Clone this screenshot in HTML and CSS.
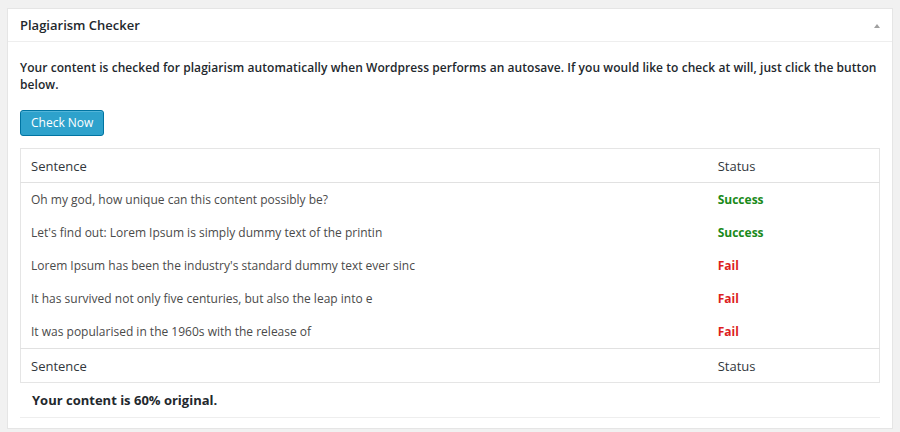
FILE: index.html
```html
<!DOCTYPE html>
<html lang="en">
<head>
<meta charset="utf-8">
<title>Plagiarism Checker</title>
<link rel="stylesheet" href="styles.css">
</head>
<body>
<div class="postbox">
  <div class="postbox-header">
    <h2 class="postbox-title">Plagiarism Checker</h2>
    <span class="toggle-arrow" aria-hidden="true"></span>
  </div>
  <div class="inside">
    <p class="intro">Your content is checked for plagiarism automatically when Wordpress performs an autosave. If you would like to check at will, just click the button below.</p>
    <button class="btn-check" type="button">Check Now</button>
    <table class="results">
      <thead>
        <tr><th class="col-sentence">Sentence</th><th class="col-status">Status</th></tr>
      </thead>
      <tbody>
        <tr><td>Oh my god, how unique can this content possibly be?</td><td class="status ok">Success</td></tr>
        <tr><td>Let's find out: Lorem Ipsum is simply dummy text of the printin</td><td class="status ok">Success</td></tr>
        <tr><td>Lorem Ipsum has been the industry's standard dummy text ever sinc</td><td class="status fail">Fail</td></tr>
        <tr><td>It has survived not only five centuries, but also the leap into e</td><td class="status fail">Fail</td></tr>
        <tr><td>It was popularised in the 1960s with the release of</td><td class="status fail">Fail</td></tr>
      </tbody>
      <tfoot>
        <tr><th class="col-sentence">Sentence</th><th class="col-status">Status</th></tr>
      </tfoot>
    </table>
    <p class="summary">Your content is 60% original.</p>
  </div>
</div>
</body>
</html>
```

FILE: styles.css
```css
html, body {
  background: #f1f1f1;
}
body {
  margin: 8px 7px 0 7px;
  font-family: "Open Sans", "Liberation Sans", sans-serif;
  color: #23282d;
}
.postbox {
  background: #fff;
  border: 1px solid #e5e5e5;
  box-shadow: 0 1px 1px rgba(0,0,0,0.04);
  height: 421px;
  box-sizing: border-box;
}
.postbox-header {
  display: flex;
  align-items: center;
  justify-content: space-between;
  height: 32px;
  padding: 0 12px 0 12px;
  border-bottom: 1px solid #eeeeee;
}
.postbox-title {
  margin: 0;
  font-size: 13px;
  font-weight: 600;
  line-height: 33px;
  color: #23282d;
}
.toggle-arrow {
  width: 0;
  height: 0;
  margin-top: 2px;
  border-left: 3px solid transparent;
  border-right: 3px solid transparent;
  border-bottom: 4px solid #a0a0a0;
}
.inside {
  padding: 0 12px;
}
.intro {
  margin: 17px 0 17px 0;
  font-size: 12px;
  line-height: 17px;
  font-weight: 600;
  letter-spacing: 0.06px;
  color: #23282d;
}
.btn-check {
  display: block;
  height: 26px;
  padding: 0 10px;
  background: #2ea2cc;
  border: 1px solid #0074a2;
  border-radius: 3px;
  box-shadow: inset 0 1px 0 rgba(120,200,230,0.5);
  color: #fff;
  font-family: inherit;
  font-size: 12px;
  line-height: 24px;
  cursor: pointer;
}
.results {
  width: 100%;
  margin-top: 12px;
  border-collapse: collapse;
  border: 1px solid #e5e5e5;
}
.results th {
  text-align: left;
  font-weight: 400;
  font-size: 13px;
  color: #32373c;
  height: 33px;
  padding: 0 10px;
}
.results thead th {
  border-bottom: 1px solid #e1e1e1;
}
.results tfoot th {
  border-top: 1px solid #e1e1e1;
}
.results .col-status {
  width: 20%;
  box-sizing: border-box;
}
.results td {
  height: 33px;
  padding: 0 10px;
  font-size: 12px;
  color: #4a4a4a;
}
.results .status {
  font-weight: 700;
}
.results .ok {
  color: #1a8a1a;
}
.results .fail {
  color: #dd1f1f;
}
.summary {
  margin: 0;
  padding: 9px 12px 0 12px;
  height: 25px;
  line-height: 17px;
  font-size: 13px;
  font-weight: 700;
  color: #23282d;
  border-bottom: 1px solid #eeeeee;
}
```
